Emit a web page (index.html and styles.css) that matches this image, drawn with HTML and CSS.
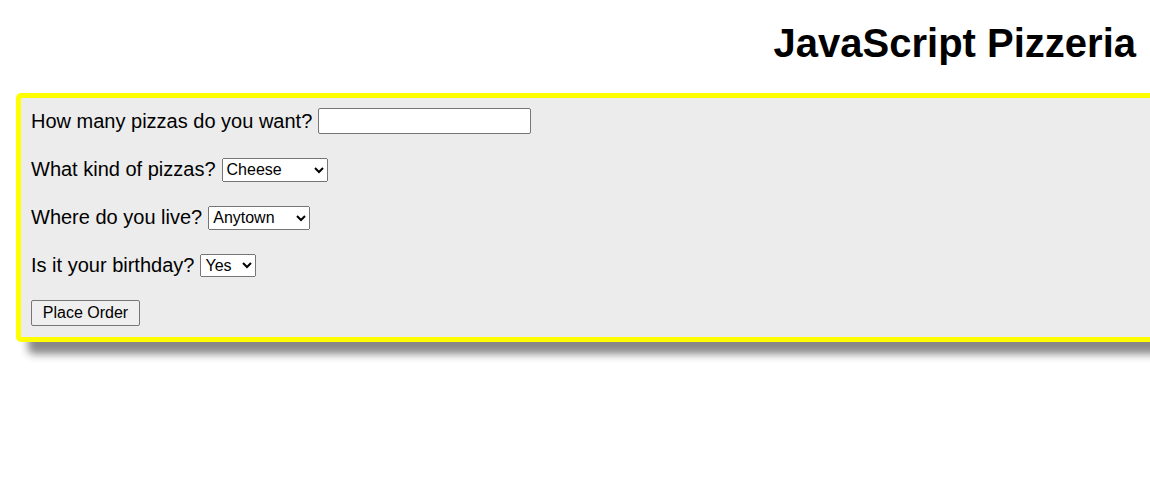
FILE: index.html
```html
<!DOCTYPE html>
<html lang="en">
<head>
<meta charset="utf-8">
<title>JavaScript Pizzeria</title>
<link rel="stylesheet" href="styles.css">
</head>
<body>
<h1 class="title">JavaScript Pizzeria</h1>
<form class="order-box">
  <div class="row">
    <label for="qty">How many pizzas do you want?</label>
    <input id="qty" class="qty" type="text">
  </div>
  <div class="row">
    <label for="kind">What kind of pizzas?</label>
    <select id="kind" class="sel sel-kind">
      <option>Cheese</option>
      <option>Pepperoni</option>
      <option>Supreme</option>
    </select>
  </div>
  <div class="row">
    <label for="town">Where do you live?</label>
    <select id="town" class="sel sel-town">
      <option>Anytown</option>
      <option>Beachtown</option>
      <option>Lakeview</option>
    </select>
  </div>
  <div class="row">
    <label for="bday">Is it your birthday?</label>
    <select id="bday" class="sel sel-bday">
      <option>Yes</option>
      <option>No</option>
    </select>
  </div>
  <div class="row">
    <button type="button" class="order-btn">Place Order</button>
  </div>
</form>
</body>
</html>
```
FILE: styles.css
```css
html {
  overflow: hidden;
  height: 100%;
}
body {
  box-sizing: border-box;
  min-height: 100%;
  margin: 0;
  padding: 20px 8px 8px 8px;
  font-family: "Liberation Sans", Arial, sans-serif;
  color: #000;
  background: #fff;
}
.title {
  margin: 0 6px 27px 0;
  text-align: right;
  font-size: 40px;
  font-weight: bold;
  line-height: 46px;
}
.order-box {
  box-sizing: content-box;
  width: 100%;
  margin: 0 0 0 8px;
  padding: 10px 10px 11px 10px;
  background: #ececec;
  border: 5px solid #ffff00;
  border-radius: 5px;
  box-shadow: 12px 12px 8px #888;
  display: flex;
  flex-direction: column;
  gap: 22px;
}
.row {
  height: 26px;
  display: flex;
  align-items: center;
  gap: 6px;
  font-size: 20px;
}
.qty {
  box-sizing: border-box;
  width: 213px;
  height: 26px;
  font-family: "Liberation Sans", Arial, sans-serif;
  font-size: 16px;
  border: 1px solid #767676;
  border-radius: 2px;
  background: #fff;
  margin: 0;
}
.sel {
  box-sizing: border-box;
  height: 24px;
  font-family: "Liberation Sans", Arial, sans-serif;
  font-size: 16px;
  margin: 0;
  margin-top: 1px;
}
.sel-kind {
  width: 106px;
}
.sel-town {
  width: 102px;
}
.sel-bday {
  width: 56px;
  height: 23px;
}
.order-btn {
  box-sizing: border-box;
  width: 109px;
  height: 26px;
  margin: 0;
  font-family: "Liberation Sans", Arial, sans-serif;
  font-size: 16px;
  background: #efefef;
  border: 1px solid #767676;
  border-radius: 2px;
  color: #000;
}
```
